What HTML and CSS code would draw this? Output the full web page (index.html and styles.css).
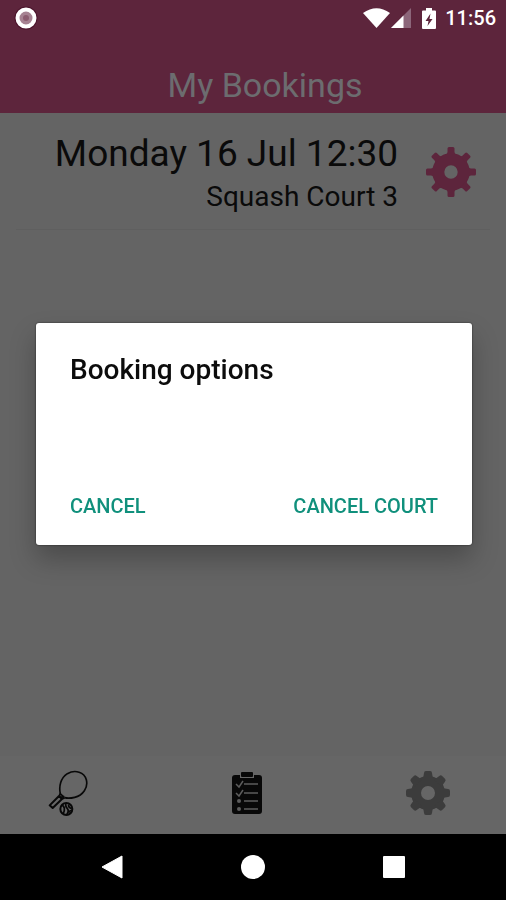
FILE: index.html
```html
<!DOCTYPE html>
<html lang="en">
<head>
<meta charset="utf-8">
<meta name="viewport" content="width=device-width, initial-scale=1">
<title>My Bookings</title>
<link rel="stylesheet" href="styles.css">
</head>
<body>
<div class="screen">
  <header class="top">
    <div class="status">
      <svg class="record" viewBox="0 0 24 24" aria-hidden="true"><circle cx="12" cy="12" r="11.500" fill="#4b132b"/><circle cx="12" cy="12" r="8.500" fill="#a68292" stroke="#fff" stroke-width="4"/><circle cx="12" cy="12" r="3" fill="#8b5c70"/></svg>
      <div class="status-right">
        <svg class="wifi" viewBox="0 0 27 20" aria-hidden="true"><path d="M0 5Q13.500-4.500 27 5L13.500 20z" fill="#fff"/></svg>
        <svg class="signal" viewBox="0 0 20 20" aria-hidden="true"><path d="M20 0v20H0z" fill="#8c667a"/><path d="M12.500 7.500V20H0z" fill="#fff"/></svg>
        <svg class="battery" viewBox="0 0 14 21" aria-hidden="true"><path d="M4 0h6v2.500h3a1 1 0 0 1 1 1V20a1 1 0 0 1-1 1H1a1 1 0 0 1-1-1V3.500a1 1 0 0 1 1-1h3z" fill="#fff"/><path d="M8.500 5.500L3.500 13h3l-1 5L10.500 11h-3z" fill="#5d253c"/></svg>
        <time class="clock">11:56</time>
      </div>
    </div>
    <h1 class="title">My Bookings</h1>
  </header>

  <main class="bookings">
    <article class="booking">
      <div class="booking-text">
        <p class="when">Monday 16 Jul 12:30</p>
        <p class="court">Squash Court 3</p>
      </div>
      <button class="icon-button booking-options" type="button" aria-label="Options for this booking">
        <svg viewBox="-25 -25 50 50" width="50" height="50" aria-hidden="true">
          <defs><path id="tooth" d="M-5.500-17q2-1 2-3v-3.500q0-1.500 1.500-1.500h4q1.500 0 1.500 1.500v3.500q0 2 2 3z"/></defs>
          <g fill="currentColor">
            <circle r="12.700" fill="none" stroke="currentColor" stroke-width="12"/>
            <use href="#tooth"/><use href="#tooth" transform="rotate(45)"/><use href="#tooth" transform="rotate(90)"/><use href="#tooth" transform="rotate(135)"/>
            <use href="#tooth" transform="rotate(180)"/><use href="#tooth" transform="rotate(225)"/><use href="#tooth" transform="rotate(270)"/><use href="#tooth" transform="rotate(315)"/>
          </g>
        </svg>
      </button>
    </article>
  </main>

  <nav class="tabs" aria-label="Main">
    <a class="tab" href="#courts" aria-label="Courts">
      <svg viewBox="54 72 120 144" width="40" height="48" fill="none" stroke="currentColor" aria-hidden="true">
        <path d="M91 147C86 124 92 99 112 86C136 72 163 82 169 104C175 128 159 151 134 157C122 160 111 160 104 158" stroke-width="5"/>
        <path d="M91 146l-4 9M104 158l-9 4M87 153l9 9L68 189l-9-8z" stroke-width="6" stroke-linejoin="round"/>
        <path d="M92 147l11 11M91 157l12-2" stroke-width="5"/>
        <circle cx="109" cy="192" r="18" stroke-width="6"/>
        <path d="M96 180q12 7 4 25M107 174q-1 11 5 17t-2 18M116 178q-2 9 9 13M116 203q2-7 9-6" stroke-width="5"/>
      </svg>
    </a>
    <a class="tab" href="#bookings" aria-label="My bookings" aria-current="page">
      <svg viewBox="0 0 32 44" width="32" height="44" aria-hidden="true">
        <path d="M4 4h5v3h14V4h5q3 0 3 3v33q0 3-3 3H4q-3 0-3-3V7q0-3 3-3z" fill="currentColor"/>
        <rect x="10" y="1" width="12" height="5" rx="1" fill="currentColor"/>
        <path d="M13 13h14M13 22h14M13 30h14M13 38h14" stroke="#5c5c5c" stroke-width="1.500"/>
        <path d="M5 13l3 3 4-6M5 22l3 3 4-6" fill="none" stroke="#5c5c5c" stroke-width="1.500"/>
        <circle cx="8" cy="30" r="2" fill="#5c5c5c"/><circle cx="8" cy="38" r="2" fill="#5c5c5c"/>
      </svg>
    </a>
    <a class="tab tab-settings" href="#settings" aria-label="Settings">
      <svg viewBox="-22 -22 44 44" width="44" height="44" aria-hidden="true">
        <defs><path id="cog-tooth" d="M-5-14l1-6q0-2 2-2h4q2 0 2 2l1 6z"/></defs>
        <g fill="currentColor">
          <circle r="12" fill="none" stroke="currentColor" stroke-width="10"/>
          <use href="#cog-tooth"/><use href="#cog-tooth" transform="rotate(45)"/><use href="#cog-tooth" transform="rotate(90)"/><use href="#cog-tooth" transform="rotate(135)"/>
          <use href="#cog-tooth" transform="rotate(180)"/><use href="#cog-tooth" transform="rotate(225)"/><use href="#cog-tooth" transform="rotate(270)"/><use href="#cog-tooth" transform="rotate(315)"/>
        </g>
      </svg>
    </a>
  </nav>

  <div class="system-nav">
    <button class="icon-button" type="button" aria-label="Back"><svg viewBox="0 0 24 24" width="24" height="24" aria-hidden="true"><path d="M22 1v22L2 12z" fill="#fff" stroke="#fff" stroke-linejoin="round"/></svg></button>
    <button class="icon-button" type="button" aria-label="Home"><svg viewBox="0 0 24 24" width="24" height="24" aria-hidden="true"><circle cx="12" cy="12" r="12" fill="#fff"/></svg></button>
    <button class="icon-button" type="button" aria-label="Recent apps"><svg viewBox="0 0 24 24" width="24" height="24" aria-hidden="true"><rect x="1" y="1" width="22" height="22" rx="1" fill="#fff"/></svg></button>
  </div>
</div>

<div class="overlay">
  <section class="dialog" role="dialog" aria-modal="true" aria-labelledby="dialog-title">
    <h2 class="dialog-title" id="dialog-title">Booking options</h2>
    <div class="dialog-actions">
      <button class="action" type="button">CANCEL</button>
      <button class="action" type="button">CANCEL COURT</button>
    </div>
  </section>
</div>
</body>
</html>
```

FILE: styles.css
```css
* {
  box-sizing: border-box;
}

body {
  margin: 0;
  background: #646464;
  color: #0a0a0a;
  font-family: Roboto, "Liberation Sans", sans-serif;
}

h1,
h2,
p {
  margin: 0;
  font-weight: 400;
}

svg {
  display: block;
  flex: none;
}

button {
  padding: 0;
  border: 0;
  background: none;
  font-family: inherit;
}

.screen {
  display: flex;
  flex-direction: column;
  min-height: 100vh;
}

.top {
  background: #5d253c;
}

.status {
  display: flex;
  align-items: center;
  justify-content: space-between;
  height: 36px;
  padding: 0 10px 0 14px;
}

.status-right {
  display: flex;
  align-items: center;
}

.record {
  width: 24px;
  height: 24px;
}

.wifi {
  width: 27px;
  height: 20px;
}

.signal {
  width: 20px;
  height: 20px;
  margin-left: 1px;
}

.battery {
  width: 14px;
  height: 21px;
  margin: 0 9px 0 11px;
}

.clock {
  color: #fff;
  font-size: 20px;
  font-weight: 500;
}

.title {
  padding: 28px 0 7px 24px;
  color: #6c6c6f;
  font-size: 34px;
  line-height: 42px;
  text-align: center;
}

.bookings {
  flex: 1;
  padding: 0 16px;
}

.booking {
  display: flex;
  align-items: center;
  justify-content: flex-end;
  gap: 28px;
  padding: 16px 14px 14px 0;
  border-bottom: 1px solid #5f5f5f;
}

.booking-text {
  text-align: right;
}

.when {
  font-size: 37px;
  line-height: 49px;
}

.court {
  font-size: 28px;
  line-height: 37px;
}

.booking-options {
  color: #5d253c;
}

.tabs {
  display: flex;
  align-items: center;
  justify-content: space-between;
  height: 78px;
  padding: 0 56px 4px 48px;
  background: #666;
}

.tab {
  color: #080808;
}

.tab-settings {
  color: #3c3c3c;
}

.system-nav {
  display: flex;
  align-items: center;
  justify-content: space-between;
  height: 66px;
  padding: 0 100px;
  background: #000;
}

.overlay {
  position: fixed;
  inset: 34px 0 66px;
  display: flex;
  align-items: center;
  justify-content: center;
  padding: 0 34px 0 36px;
}

.dialog {
  width: 100%;
  padding: 27px 34px 24px;
  border-radius: 3px;
  background: #fff;
  box-shadow: 0 0 2px rgba(0, 0, 0, 0.7), 0 14px 26px rgba(0, 0, 0, 0.25);
}

.dialog-title {
  color: #0c0c0c;
  font-size: 28px;
  font-weight: 500;
  line-height: 40px;
}

.dialog-actions {
  display: flex;
  justify-content: space-between;
  margin-top: 101px;
}

.action {
  color: #10907c;
  font-size: 20px;
  font-weight: 500;
  line-height: 30px;
}
```
